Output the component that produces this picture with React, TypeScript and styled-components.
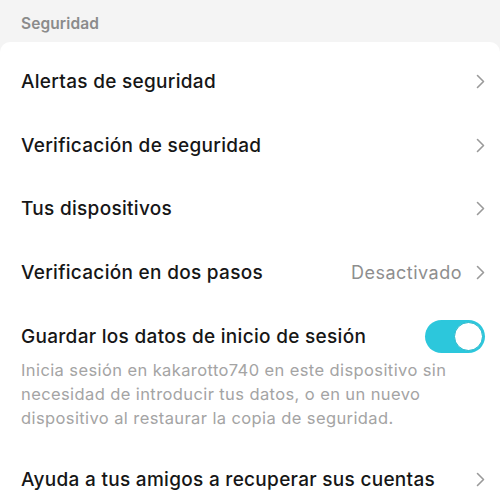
import React, { useState } from "react";
import styled, { createGlobalStyle } from "styled-components";

const Global = createGlobalStyle`
  html, body { margin: 0; padding: 0; background: #f4f4f4; }
  body { font-family: "Inter", "Roboto", "Liberation Sans", sans-serif; -webkit-font-smoothing: antialiased; }
`;

const Page = styled.div`
  width: 500px;
  height: 504px;
  overflow: hidden;
  background: #f4f4f4;
  display: flex;
  flex-direction: column;
`;

const SectionHeader = styled.div`
  flex-shrink: 0;
  height: 42px;
  box-sizing: border-box;
  padding: 14px 0 0 21px;
  font-size: 15.5px;
  line-height: 20px;
  font-weight: 600;
  letter-spacing: 0.1px;
  color: #8b8b8b;
`;

const Card = styled.div`
  flex: 1 0 auto;
  background: #ffffff;
  border-radius: 10px 10px 0 0;
  padding-top: 8px;
  display: flex;
  flex-direction: column;
`;

const Row = styled.div`
  height: 63.5px;
  flex-shrink: 0;
  box-sizing: border-box;
  display: flex;
  align-items: center;
  padding: 0 15px 0 21px;
  gap: 12px;
`;

const Title = styled.div`
  flex: 1;
  font-size: 19px;
  font-weight: 500;
  color: #161616;
  letter-spacing: 0.3px;
  white-space: nowrap;
`;

const Value = styled.span`
  font-size: 18px;
  letter-spacing: 0.5px;
  color: #8e8e8e;
  margin-right: 2px;
`;

const Block = styled.div`
  flex-shrink: 0;
  padding: 18px 15px 18px 21px;
  display: flex;
  flex-direction: column;
`;

const BlockHead = styled.div`
  display: flex;
  align-items: center;
  height: 28px;
`;

const Desc = styled.p`
  margin: 8px 0 0;
  font-size: 16.5px;
  letter-spacing: 0.4px;
  line-height: 24px;
  color: #a4a4a4;
  max-width: 450px;
`;

const ToggleTrack = styled.button<{ $on: boolean }>`
  width: 60px;
  height: 33px;
  border-radius: 17px;
  border: none;
  padding: 0;
  cursor: pointer;
  background: ${(p) => (p.$on ? "#2cc7dc" : "#d9d9d9")};
  position: relative;
  flex-shrink: 0;
`;

const Knob = styled.span<{ $on: boolean }>`
  position: absolute;
  top: 2px;
  left: ${(p) => (p.$on ? "29px" : "2px")};
  width: 29px;
  height: 29px;
  box-sizing: border-box;
  border-radius: 50%;
  background: #fff;
  border: 1.5px solid #25b8cc;
`;

const Chevron = () => (
  <svg width="9" height="15" viewBox="0 0 9 15" fill="none">
    <path d="M1.5 1.5 L7.5 7.5 L1.5 13.5" stroke="#9a9a9a" strokeWidth="1.6" strokeLinecap="round" strokeLinejoin="round" />
  </svg>
);

const items = ["Alertas de seguridad", "Verificación de seguridad", "Tus dispositivos"];

export default function App() {
  const [on, setOn] = useState(true);
  return (
    <Page>
      <Global />
      <SectionHeader>Seguridad</SectionHeader>
      <Card>
        {items.map((t) => (
          <Row key={t}>
            <Title>{t}</Title>
            <Chevron />
          </Row>
        ))}
        <Row>
          <Title>Verificación en dos pasos</Title>
          <Value>Desactivado</Value>
          <Chevron />
        </Row>
        <Block>
          <BlockHead>
            <Title>Guardar los datos de inicio de sesión</Title>
            <ToggleTrack $on={on} onClick={() => setOn(!on)} aria-label="toggle">
              <Knob $on={on} />
            </ToggleTrack>
          </BlockHead>
          <Desc>
            Inicia sesión en kakarotto740 en este dispositivo sin necesidad de introducir tus datos, o en un nuevo dispositivo al restaurar la copia de seguridad.
          </Desc>
        </Block>
        <Row>
          <Title>Ayuda a tus amigos a recuperar sus cuentas</Title>
          <Chevron />
        </Row>
      </Card>
    </Page>
  );
}
